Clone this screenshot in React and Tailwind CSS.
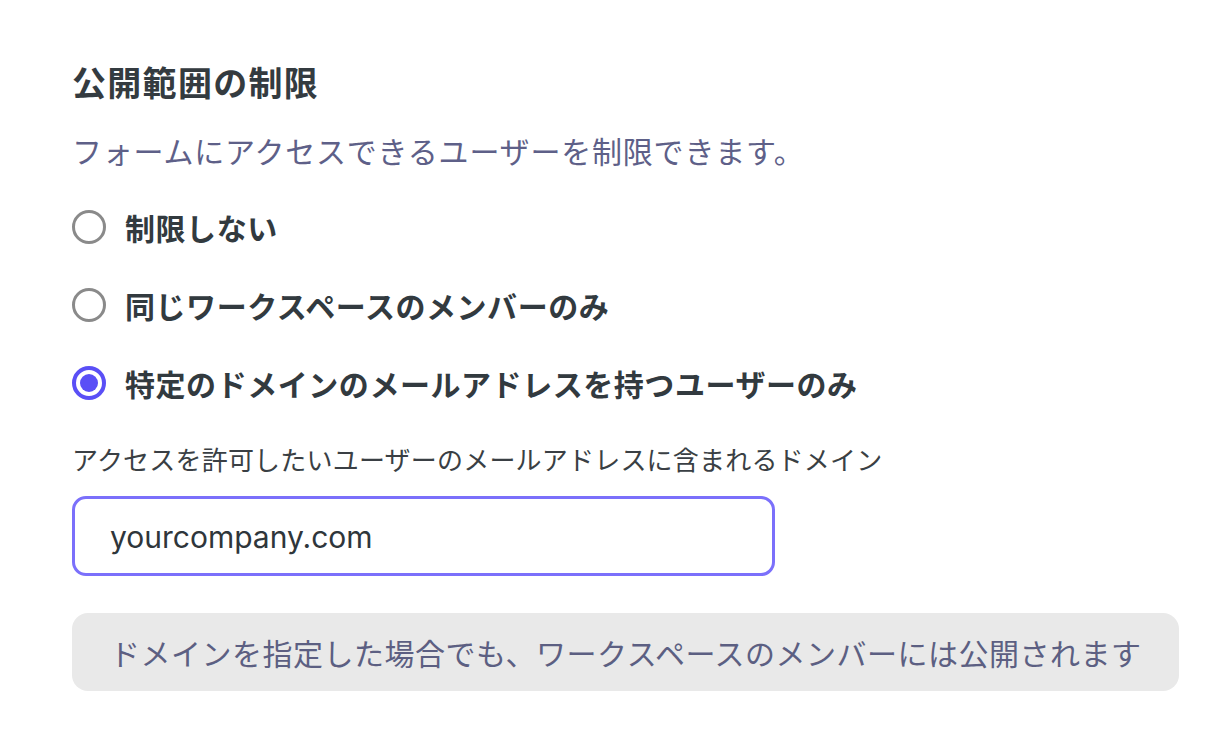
const options = [
    { id: "none", label: "制限しない" },
    { id: "workspace", label: "同じワークスペースのメンバーのみ" },
    { id: "domain", label: "特定のドメインのメールアドレスを持つユーザーのみ" },
];

const Radio = ({ checked }) => {
    if (checked) {
        return (
            <span className="flex h-[34px] w-[34px] shrink-0 items-center justify-center rounded-full border-[4px] border-[#5a4ff6] bg-white">
                <span className="h-[18px] w-[18px] rounded-full bg-[#5a4ff6]" />
            </span>
        );
    }
    return <span className="h-[34px] w-[34px] shrink-0 rounded-full border-[3px] border-[#8a8a8a] bg-white" />;
};

const App = () => {
    const selected = "domain";

    return (
        <div
            className="min-h-[748px] w-[1224px] bg-white pl-[72px] pt-[60px]"
            style={{ fontFamily: '"Noto Sans CJK JP", "Noto Sans", sans-serif' }}
        >
            <h1 className="text-[34px] leading-[44px] font-bold tracking-[1.3px] text-[#343b40]">公開範囲の制限</h1>
            <p className="mt-[26px] text-[30px] leading-[40px] tracking-[0.8px] text-[#5e6088]">
                フォームにアクセスできるユーザーを制限できます。
            </p>

            <div className="mt-[37px] flex flex-col gap-[38px]">
                {options.map((opt) => (
                    <label key={opt.id} className="flex h-[40px] items-center gap-[19px]">
                        <Radio checked={opt.id === selected} />
                        <span className="text-[30px] leading-[40px] font-bold tracking-[0.55px] text-[#323a3f]">{opt.label}</span>
                    </label>
                ))}
            </div>

            <p className="mt-[38px] text-[26px] leading-[36px] tracking-[0.2px] text-[#3a3f44]">
                アクセスを許可したいユーザーのメールアドレスに含まれるドメイン
            </p>

            <div className="mt-[19px] flex h-[80px] w-[703px] items-center rounded-[14px] border-[3px] border-[#7b70fb] bg-white pl-[35px]">
                <span className="pt-[3px] text-[30px] text-[#2f363b]" style={{ fontFamily: "Inter, sans-serif" }}>
                    yourcompany.com
                </span>
            </div>

            <div className="mt-[37px] flex h-[78px] w-[1107px] items-center rounded-[16px] bg-[#e9e9e9] pl-[38px]">
                <span className="text-[30px] leading-[40px] tracking-[0.5px] text-[#5c5f82]">
                    ドメインを指定した場合でも、ワークスペースのメンバーには公開されます
                </span>
            </div>
        </div>
    );
};

export default App;
